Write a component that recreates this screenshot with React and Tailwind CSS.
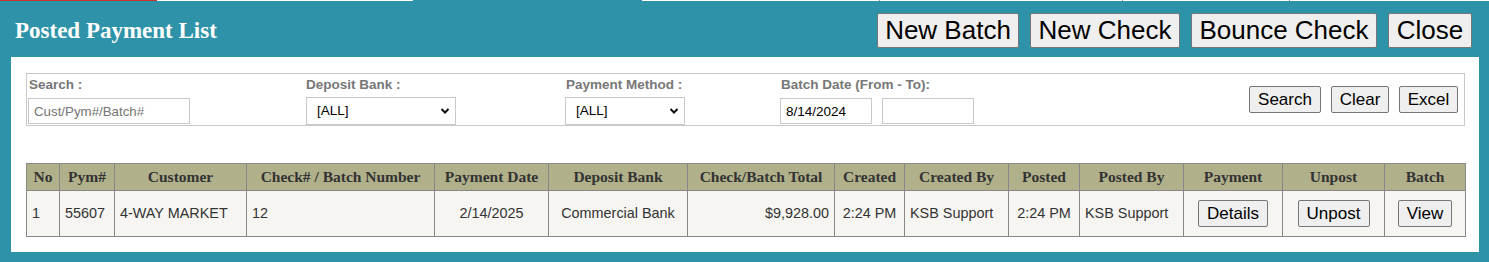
import React from "react";

const sans = { fontFamily: '"Liberation Sans", Arial, sans-serif' };

function Chevron() {
  return (
    <svg
      className="pointer-events-none absolute right-[6px] top-1/2 -translate-y-1/2"
      width="10"
      height="7"
      viewBox="0 0 10 7"
    >
      <polyline points="1.5,1.5 5,5 8.5,1.5" fill="none" stroke="#111" strokeWidth="2" />
    </svg>
  );
}

function Select({ w }) {
  return (
    <div className={`relative ${w} h-[28px]`}>
      <select className="h-full w-full appearance-none border border-[#c8c8c8] bg-white pl-[10px] text-[13.5px] text-black outline-none">
        <option>[ALL]</option>
      </select>
      <Chevron />
    </div>
  );
}

function Btn({ children, className = "" }) {
  return (
    <button
      className={`flex items-center justify-center rounded-[2px] border border-[#767676] bg-[#efefef] text-black ${className}`}
    >
      {children}
    </button>
  );
}

const cols = [33, 55, 132, 188, 114, 139, 147, 70, 104, 71, 104, 99, 102, 81];
const heads = [
  "No",
  "Pym#",
  "Customer",
  "Check# / Batch Number",
  "Payment Date",
  "Deposit Bank",
  "Check/Batch Total",
  "Created",
  "Created By",
  "Posted",
  "Posted By",
  "Payment",
  "Unpost",
  "Batch",
];

export default function App() {
  const td = "border border-[#888] h-[46px] px-[5px] text-[14.4px] text-[#333]";
  return (
    <div className="h-[262px] w-[1489px] bg-[#2e93a8]" style={sans}>
      <div className="flex h-[1px] w-full">
        <div className="w-[157px] bg-[#c0392b]" />
        <div className="w-[256px] bg-white" />
        <div className="w-[229px]" />
        <div className="w-[237px] bg-white" />
        <div className="w-[1px] bg-[#999]" />
        <div className="w-[242px] bg-white" />
        <div className="w-[1px] bg-[#999]" />
        <div className="w-[166px] bg-white" />
        <div className="w-[1px] bg-[#999]" />
        <div className="flex-1 bg-white" />
      </div>
      <div className="flex h-[56px] items-start justify-between pl-[15px] pr-[17px]">
        <div
          className="mt-[16px] text-[23px] font-bold leading-[28px] text-white"
          style={{ fontFamily: '"Liberation Serif", "Times New Roman", serif' }}
        >
          Posted Payment List
        </div>
        <div className="mt-[12px] flex gap-[11px] text-[26px]">
          <Btn className="h-[35px] w-[142px]">New Batch</Btn>
          <Btn className="h-[35px] w-[150px]">New Check</Btn>
          <Btn className="h-[35px] w-[186px]">Bounce Check</Btn>
          <Btn className="h-[35px] w-[84px]">Close</Btn>
        </div>
      </div>
      <div className="ml-[11px] mr-[10px] h-[195px] bg-white pl-[15px] pr-[14px] pt-[16px]">
        <div className="flex h-[53px] items-center border border-[#c8c8c8] pl-[1px] pr-[6px]">
          <div className="flex h-full items-start pt-[3px]">
            <div className="w-[278px]">
              <div className="pl-[1px] text-[13.5px] font-bold leading-[15px] text-[#777]">Search :</div>
              <input
                placeholder="Cust/Pym#/Batch#"
                className="mt-[6px] h-[26px] w-[162px] border border-[#c8c8c8] px-[5px] text-[13.3px] text-black outline-none placeholder:text-[#757575]"
              />
            </div>
            <div className="w-[259px]">
              <div className="text-[13.5px] font-bold leading-[15px] text-[#777]">Deposit Bank :</div>
              <div className="mt-[5px]">
                <Select w="w-[150px]" />
              </div>
            </div>
            <div className="w-[215px]">
              <div className="pl-[1px] text-[13.5px] font-bold leading-[15px] text-[#777]">Payment Method :</div>
              <div className="mt-[5px]">
                <Select w="w-[120px]" />
              </div>
            </div>
            <div>
              <div className="pl-[1px] text-[13.5px] font-bold leading-[15px] text-[#777]">Batch Date (From - To):</div>
              <div className="mt-[6px] flex gap-[10px]">
                <input
                  defaultValue="8/14/2024"
                  className="h-[26px] w-[92px] border border-[#c8c8c8] px-[5px] text-[13.5px] text-black outline-none"
                />
                <input className="h-[26px] w-[92px] border border-[#c8c8c8] px-[5px] text-[13.5px] outline-none" />
              </div>
            </div>
          </div>
          <div className="ml-auto flex gap-[10px] text-[17px]">
            <Btn className="h-[27px] w-[72px]">Search</Btn>
            <Btn className="h-[27px] w-[58px]">Clear</Btn>
            <Btn className="h-[27px] w-[59px]">Excel</Btn>
          </div>
        </div>
        <table className="mt-[37px] w-[1439px] table-fixed border-collapse">
          <colgroup>
            {cols.map((w, i) => (
              <col key={i} style={{ width: w }} />
            ))}
          </colgroup>
          <thead>
            <tr className="bg-[#b0b08a]">
              {heads.map((h) => (
                <th
                  key={h}
                  className="h-[27px] border border-[#888] px-0 text-center text-[15.5px] font-bold text-[#333]"
                  style={{ fontFamily: '"Liberation Serif", "Times New Roman", serif' }}
                >
                  {h}
                </th>
              ))}
            </tr>
          </thead>
          <tbody>
            <tr className="bg-[#f6f5f1]">
              <td className={`${td} text-left`}>1</td>
              <td className={`${td} text-left`}>55607</td>
              <td className={`${td} text-left`}>4-WAY MARKET</td>
              <td className={`${td} text-left`}>12</td>
              <td className={`${td} text-center`}>2/14/2025</td>
              <td className={`${td} text-center`}>Commercial Bank</td>
              <td className={`${td} text-right`}>$9,928.00</td>
              <td className={`${td} text-center`}>2:24 PM</td>
              <td className={`${td} text-left`}>KSB Support</td>
              <td className={`${td} text-center`}>2:24 PM</td>
              <td className={`${td} text-left`}>KSB Support</td>
              <td className={`${td}`}>
                <div className="flex justify-center">
                  <Btn className="h-[27px] w-[70px] text-[17px]">Details</Btn>
                </div>
              </td>
              <td className={`${td}`}>
                <div className="flex justify-center">
                  <Btn className="h-[27px] w-[72px] text-[17px]">Unpost</Btn>
                </div>
              </td>
              <td className={`${td}`}>
                <div className="flex justify-center">
                  <Btn className="h-[27px] w-[54px] text-[17px]">View</Btn>
                </div>
              </td>
            </tr>
          </tbody>
        </table>
      </div>
    </div>
  );
}
